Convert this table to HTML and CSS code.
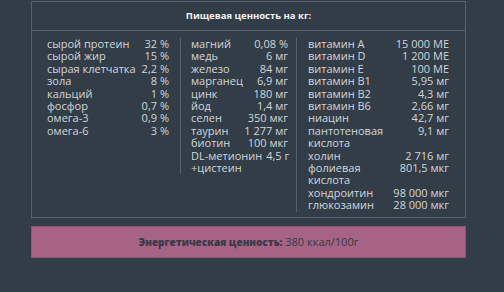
FILE: index.html
```html
<!DOCTYPE html>
<html lang="ru">
<head>
<meta charset="utf-8">
<link rel="stylesheet" href="styles.css">
</head>
<body>
<div class="page">
  <section class="card">
    <h2 class="card-title">Пищевая ценность на кг:</h2>
    <div class="cols">
      <div class="col col-1">
        <div class="row"><span class="n">сырой протеин</span><span class="v">32 %</span></div>
        <div class="row"><span class="n">сырой жир</span><span class="v">15 %</span></div>
        <div class="row"><span class="n">сырая клетчатка</span><span class="v">2,2 %</span></div>
        <div class="row"><span class="n">зола</span><span class="v">8 %</span></div>
        <div class="row"><span class="n">кальций</span><span class="v">1 %</span></div>
        <div class="row"><span class="n">фосфор</span><span class="v">0,7 %</span></div>
        <div class="row"><span class="n">омега-3</span><span class="v">0,9 %</span></div>
        <div class="row"><span class="n">омега-6</span><span class="v">3 %</span></div>
      </div>
      <div class="col col-2">
        <div class="row"><span class="n">магний</span><span class="v">0,08 %</span></div>
        <div class="row"><span class="n">медь</span><span class="v">6 мг</span></div>
        <div class="row"><span class="n">железо</span><span class="v">84 мг</span></div>
        <div class="row"><span class="n">марганец</span><span class="v">6,9 мг</span></div>
        <div class="row"><span class="n">цинк</span><span class="v">180 мг</span></div>
        <div class="row"><span class="n">йод</span><span class="v">1,4 мг</span></div>
        <div class="row"><span class="n">селен</span><span class="v">350 мкг</span></div>
        <div class="row"><span class="n">таурин</span><span class="v">1 277 мг</span></div>
        <div class="row"><span class="n">биотин</span><span class="v">100 мкг</span></div>
        <div class="row"><span class="n">DL-метионин<br>+цистеин</span><span class="v">4,5 г</span></div>
      </div>
      <div class="col col-3">
        <div class="row"><span class="n">витамин A</span><span class="v">15 000 МЕ</span></div>
        <div class="row"><span class="n">витамин D</span><span class="v">1 200 МЕ</span></div>
        <div class="row"><span class="n">витамин E</span><span class="v">100 МЕ</span></div>
        <div class="row"><span class="n">витамин B1</span><span class="v">5,95 мг</span></div>
        <div class="row"><span class="n">витамин B2</span><span class="v">4,3 мг</span></div>
        <div class="row"><span class="n">витамин B6</span><span class="v">2,66 мг</span></div>
        <div class="row"><span class="n">ниацин</span><span class="v">42,7 мг</span></div>
        <div class="row"><span class="n">пантотеновая<br>кислота</span><span class="v">9,1 мг</span></div>
        <div class="row"><span class="n">холин</span><span class="v">2 716 мг</span></div>
        <div class="row"><span class="n">фолиевая<br>кислота</span><span class="v">801,5 мкг</span></div>
        <div class="row"><span class="n">хондроитин</span><span class="v">98 000 мкг</span></div>
        <div class="row"><span class="n">глюкозамин</span><span class="v">28 000 мкг</span></div>
      </div>
    </div>
  </section>
  <div class="energy"><b>Энергетическая ценность:</b> 380 ккал/100г</div>
</div>
</body>
</html>
```

FILE: styles.css
```css
html, body {
  margin: 0;
  padding: 0;
  background: #323d47;
}
body {
  font-family: "Open Sans", "DejaVu Sans", sans-serif;
  color: #d2d6da;
}
.page {
  padding: 1px 0 0 31px;
  width: 435px;
}
.card {
  border: 1px solid #56626c;
}
.card-title {
  margin: 0;
  height: 28px;
  line-height: 28px;
  text-align: center;
  font-size: 9.5px;
  font-weight: 700;
  color: #f2f2f2;
  border-bottom: 1px solid #56626c;
}
.cols {
  display: grid;
  grid-template-columns: 148px 116px 1fr;
  padding: 7px 0 5px;
  align-items: start;
}
.col {
  font-size: 11px;
  line-height: 12.4px;
  min-width: 0;
}
.row {
  display: flex;
  justify-content: space-between;
  align-items: flex-start;
  gap: 4px;
}
.col-1 { padding: 0 11px 0 15px; }
.col-2 { padding: 0 8px 0 10px; border-left: 1px solid #56626c; }
.col-3 { padding: 0 16px 0 11px; border-left: 1px solid #56626c; }
.n { white-space: nowrap; }
.v { text-align: right; white-space: nowrap; }
.energy {
  margin-top: 8px;
  height: 30px;
  line-height: 30px;
  background: #a76383;
  border: 1px solid #8e5571;
  text-align: center;
  color: #353a47;
  font-size: 11px;
}
.energy b {
  font-size: 10px;
  font-weight: 800;
}
```
